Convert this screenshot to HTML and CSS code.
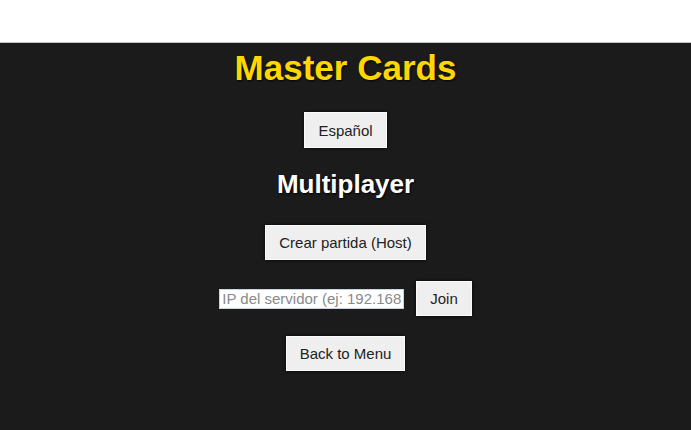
FILE: index.html
```html
<!doctype html>
<html lang="es">
<head>
<meta charset="utf-8">
<meta name="viewport" content="initial-scale=1">
<title>Master Cards</title>
<link rel="stylesheet" href="styles.css">
</head>
<body>
  <div class="topbar"></div>

  <div class="screen">
    <h1 class="title">Master Cards</h1>
    <button class="btn lang">Español</button>

    <h2 class="subtitle">Multiplayer</h2>
    <button class="btn host">Crear partida (Host)</button>

    <div class="join-row">
      <input class="ip" type="text" placeholder="IP del servidor (ej: 192.168.1.10)">
      <button class="btn">Join</button>
    </div>

    <button class="btn back">Back to Menu</button>
  </div>
</body>
</html>
```

FILE: styles.css
```css
* {
  box-sizing: border-box;
}

html,
body {
  height: 100%;
}

body {
  margin: 0;
  display: flex;
  flex-direction: column;
  background-color: #fff;
  font-family: "Liberation Sans", Arial, sans-serif;
  color: #222;
}

.topbar {
  height: 43px;
  flex-shrink: 0;
  background-color: #fff;
  border-bottom: 1px solid #c4c4c4;
}

.screen {
  flex: 1;
  display: flex;
  flex-direction: column;
  align-items: center;
  padding-top: 5px;
  background-color: #1b1b1b;
}

.title {
  margin: 0;
  font-size: 35px;
  line-height: 40px;
  font-weight: 700;
  color: #ffd700;
  text-shadow: 1px 1px 2px #000;
}

.subtitle {
  margin: 21px 0 0;
  font-size: 26px;
  line-height: 30px;
  font-weight: 700;
  color: #fff;
  text-shadow: 1px 1px 2px #000;
}

.btn {
  padding: 8px 13px;
  font-family: inherit;
  font-size: 15px;
  line-height: 17px;
  color: #222;
  background-color: #efefef;
  border: 1px solid #fafafa;
  border-radius: 0;
  box-shadow: 0 0 3px rgba(0, 0, 0, .9);
  cursor: pointer;
}

.lang {
  margin-top: 24px;
  padding-top: 9px;
}

.host {
  margin-top: 26px;
}

.join-row {
  margin-top: 21px;
  display: flex;
  align-items: center;
  gap: 12px;
}

.ip {
  width: 185px;
  height: 20px;
  padding: 1px 2px;
  font-family: inherit;
  font-size: 15px;
  color: #222;
  background-color: #fff;
  border: 1px solid #c9d4e0;
  border-radius: 0;
}

.ip::placeholder {
  color: #8a8a8a;
}

.back {
  margin-top: 20px;
}
```
